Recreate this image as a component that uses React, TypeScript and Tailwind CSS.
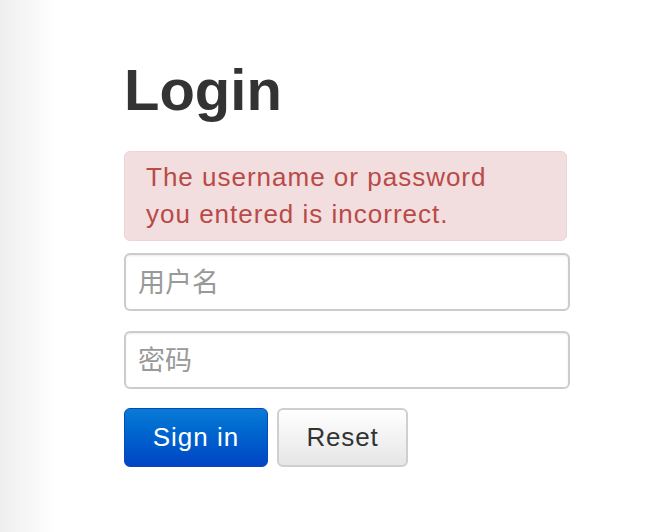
import React from 'react';

export default function App() {
  return (
    <div className="flex min-h-[532px] w-full bg-white" style={{ fontFamily: '"Liberation Sans", Arial, "Noto Sans CJK SC", sans-serif' }}>
      {/* left page shadow */}
      <div className="w-[56px] shrink-0 bg-gradient-to-r from-[#eeeeee] to-white" />
      <div className="flex-1 pl-[68px] pt-[54px]">
        <h1 className="text-[58px] font-bold leading-[72px] text-[#333333]">Login</h1>
        <form className="mt-[25px] w-[446px]" onSubmit={(e) => e.preventDefault()}>
          <div className="w-[443px] rounded-[6px] border border-[#eed3d7] bg-[#f2dede] px-[21px] py-[7px] text-[26px] leading-[37px] tracking-[1px] text-[#b94a48]">
            The username or password
            <br />
            you entered is incorrect.
          </div>
          <input
            type="text"
            placeholder="用户名"
            className="mt-[12px] block h-[58px] w-[446px] rounded-[6px] border-2 border-[#cccccc] bg-white px-[12px] pt-[2px] text-[27px] text-[#555555] shadow-[inset_0_1px_2px_rgba(0,0,0,0.08)] outline-none placeholder:text-[#999999]"
          />
          <input
            type="password"
            placeholder="密码"
            className="mt-[20px] block h-[58px] w-[446px] rounded-[6px] border-2 border-[#cccccc] bg-white px-[12px] pt-[2px] text-[27px] text-[#555555] shadow-[inset_0_1px_2px_rgba(0,0,0,0.08)] outline-none placeholder:text-[#999999]"
          />
          <div className="mt-[19px] flex gap-[9px]">
            <button
              type="submit"
              className="h-[59px] w-[144px] rounded-[6px] border border-[#0a48b8] bg-gradient-to-b from-[#0a7bd6] to-[#0444c4] text-[26px] tracking-[1px] text-white"
            >
              Sign in
            </button>
            <button
              type="reset"
              className="h-[59px] w-[131px] rounded-[6px] border-2 border-[#cfcfcf] bg-gradient-to-b from-white to-[#e6e6e6] text-[26px] tracking-[0.8px] text-[#333333]"
            >
              Reset
            </button>
          </div>
        </form>
      </div>
    </div>
  );
}
